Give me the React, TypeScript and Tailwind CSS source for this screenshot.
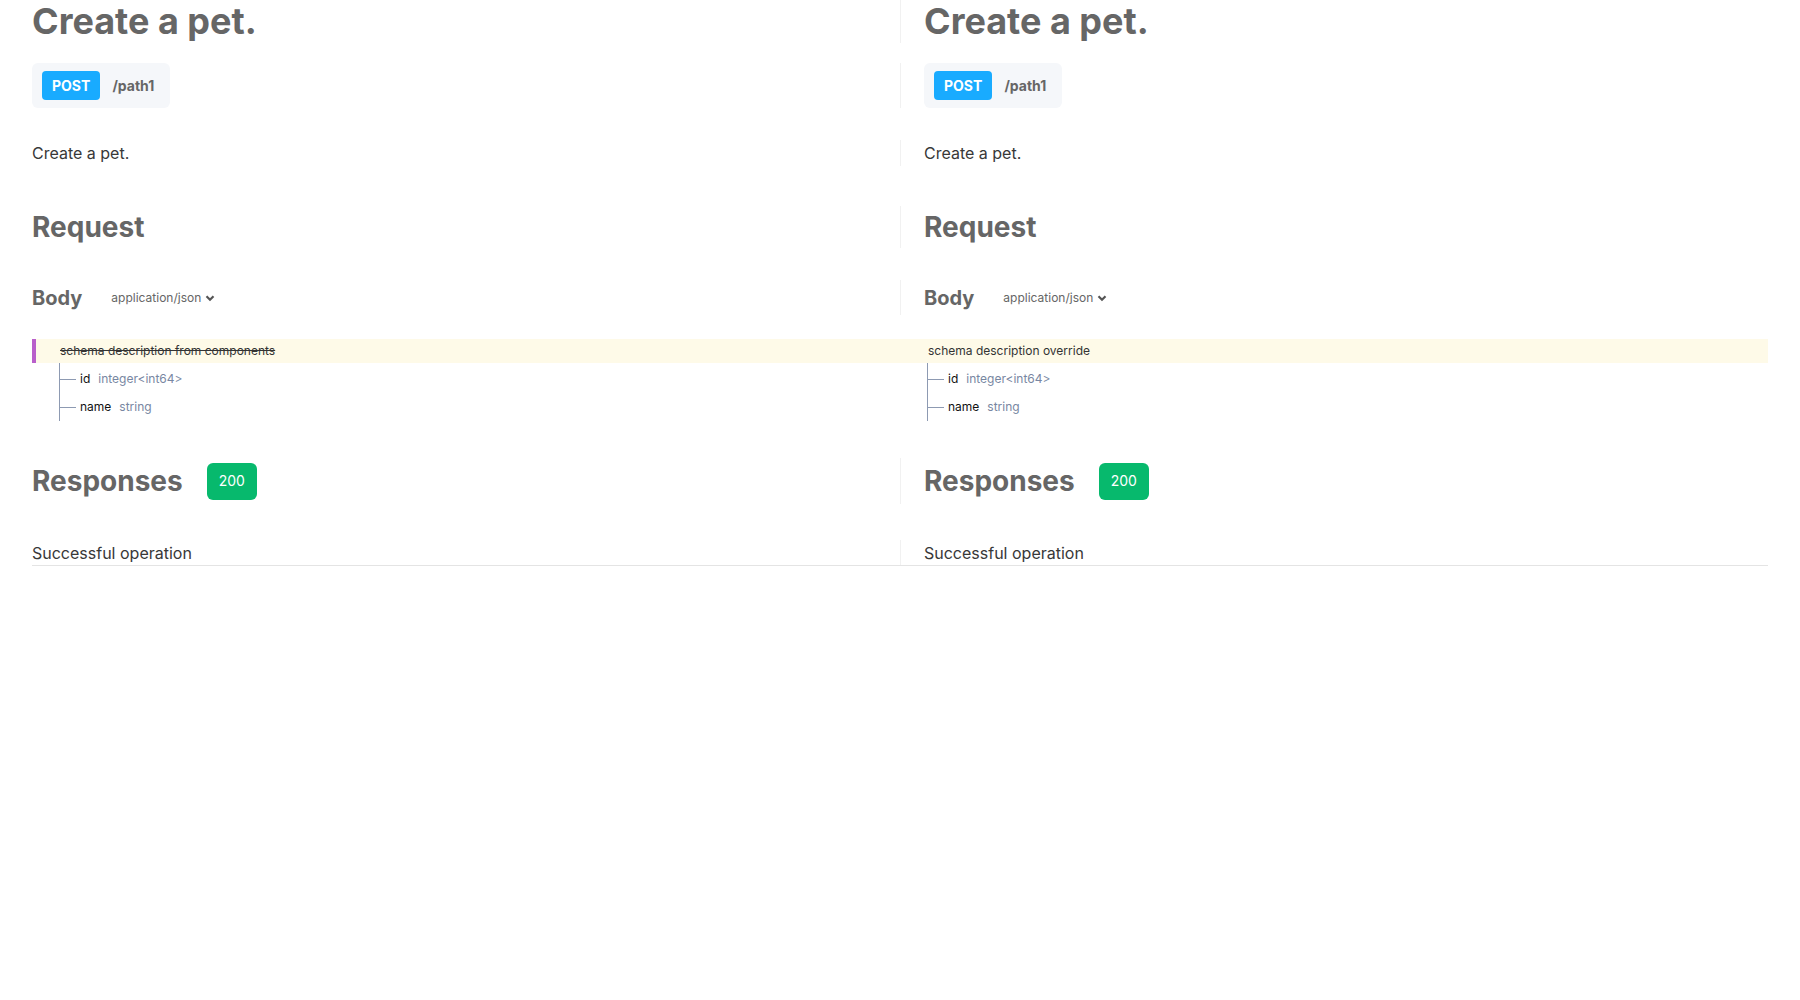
import type { ReactNode } from 'react';

const font = { fontFamily: 'Inter, "Noto Sans", sans-serif' };

function Row({ left, right, className = '' }: { left: ReactNode; right: ReactNode; className?: string }) {
  return (
    <div className={`grid grid-cols-2 ${className}`}>
      <div className="flex items-center">{left}</div>
      <div className="flex items-center border-l border-[#f1f1f1] pl-[23px]">{right}</div>
    </div>
  );
}

function Title() {
  return <h1 className="text-[36px] font-bold leading-[43px] text-[#666]">Create a pet.</h1>;
}

function Method() {
  return (
    <div className="flex h-[45px] items-center gap-3 rounded-md bg-[#f5f7fa] pl-[10px] pr-4">
      <span className="flex h-[29px] items-center rounded bg-[#19abff] px-[10px] text-sm font-bold text-white">
        POST
      </span>
      <span className="text-sm font-bold text-[#666]">/path1</span>
    </div>
  );
}

function BodyHead() {
  return (
    <div className="flex items-center gap-[29px]">
      <span className="text-xl font-bold text-[#666]">Body</span>
      <span className="flex items-center gap-1 text-xs text-[#666]">
        application/json
        <svg viewBox="0 0 10 10" className="h-2.5 w-2.5" fill="none" stroke="#555" strokeWidth="2.2">
          <path d="M1.5 3.2 5 6.7l3.5-3.5" />
        </svg>
      </span>
    </div>
  );
}

function ResponsesHead() {
  return (
    <div className="flex items-center gap-6">
      <span className="text-[28px] font-bold text-[#666]">Responses</span>
      <span className="flex h-[37px] items-center rounded-md bg-[#07b96d] px-[12px] text-sm text-white">200</span>
    </div>
  );
}

const fields = [
  { name: 'id', type: 'integer<int64>' },
  { name: 'name', type: 'string' },
];

function Tree() {
  return (
    <div className="ml-[27px] border-l border-[#8d9ab2] pt-0.5">
      {fields.map((f) => (
        <div key={f.name} className="flex h-7 items-center text-xs">
          <span className="h-px w-4 bg-[#8d9ab2]" />
          <span className="ml-1 text-[#111]">{f.name}</span>
          <span className="ml-2 text-[#7887a2]">{f.type}</span>
        </div>
      ))}
    </div>
  );
}

export default function App() {
  return (
    <div className="min-h-screen bg-white px-8" style={font}>
      <Row left={<Title />} right={<Title />} className="h-[43px]" />
      <Row left={<Method />} right={<Method />} className="mt-5 h-[45px]" />
      <Row
        left={<p className="text-base text-[#383838]">Create a pet.</p>}
        right={<p className="text-base text-[#383838]">Create a pet.</p>}
        className="mt-8 h-[26px]"
      />
      <Row
        left={<h2 className="text-[28px] font-bold text-[#666]">Request</h2>}
        right={<h2 className="text-[28px] font-bold text-[#666]">Request</h2>}
        className="mt-10 h-[42px]"
      />
      <Row left={<BodyHead />} right={<BodyHead />} className="mt-8 h-[35px]" />

      <div className="mt-6 grid h-6 grid-cols-2 bg-[#fefae8] text-xs text-[#333]">
        <div className="flex items-center border-l-4 border-[#b95fcb] pl-6">
          <span className="line-through">schema description from components</span>
        </div>
        <div className="flex items-center pl-7">
          <span>schema description override</span>
        </div>
      </div>
      <div className="grid grid-cols-2">
        <Tree />
        <Tree />
      </div>

      <Row left={<ResponsesHead />} right={<ResponsesHead />} className="mt-[37px] h-[46px]" />
      <Row
        left={<p className="text-base text-[#383838]">Successful operation</p>}
        right={<p className="text-base text-[#383838]">Successful operation</p>}
        className="mt-9 h-[26px] border-b border-[#e4e4e4]"
      />
    </div>
  );
}
